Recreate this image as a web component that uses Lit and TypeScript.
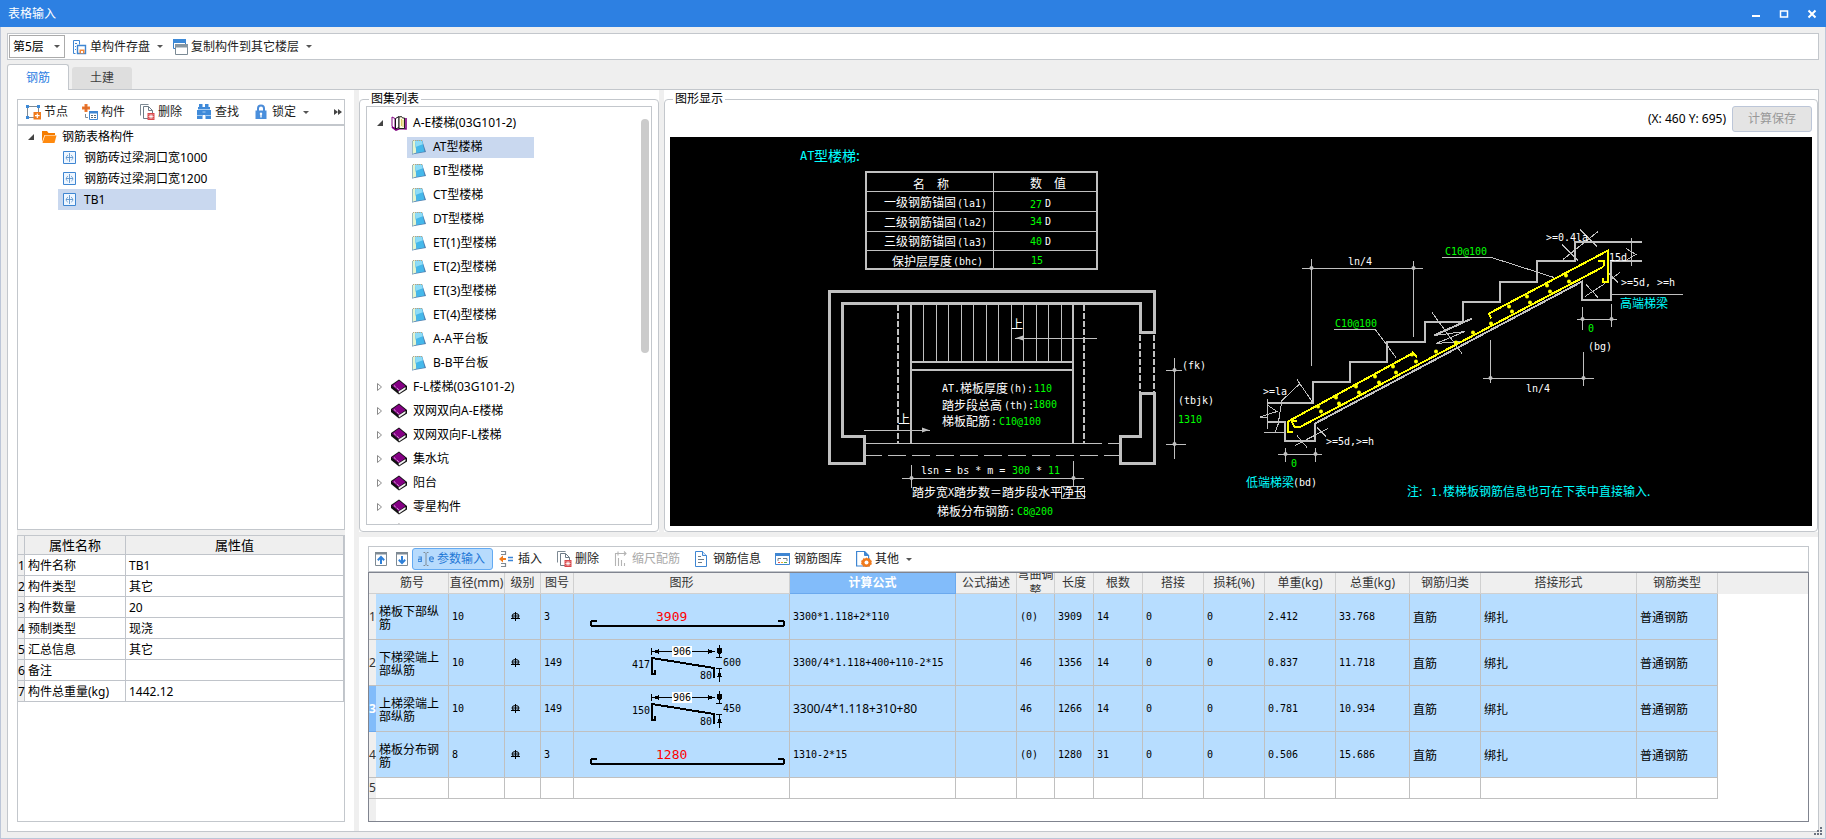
import { LitElement, html, css, svg, nothing } from "lit";
import { customElement, property } from "lit/decorators.js";
import { classMap } from "lit/directives/class-map.js";

const GREEN = "#00ff00";
const CYAN = "#00ffff";
const WHITE = "#ffffff";
const YELLOW = "#ffff00";

/* ---------- icons ---------- */

const icons: Record<string, any> = {
  saveOne: svg`<g fill="none" stroke="#3f86d2"><path d="M2.5 1.5h6v4M2.5 1.5v13h2"/><path d="M4 4.5h2M4 7.5h1M4 10.5h1"/><path d="M6.5 6.5h8v8h-8z" stroke-width="1.4"/></g><path d="M8.500 10.500h5v4h-5z" fill="#f58a3c"/><path d="M10 12h2v2h-2z" fill="#fff"/>`,
  copyTo: svg`<g fill="#fff"><path d="M1.500 .5h12v9h-12z" stroke="#3a80c8"/><path d="M3.500 5.500h12v10h-12z" stroke="#7b8a95"/></g><path d="M1 0h13v4H1z" fill="#3d8ad8"/><path d="M3 5h13v3.500H3z" fill="#8796a1"/>`,
  node: svg`<path d="M2.500 2.500h11v11h-11z" fill="#fff" stroke="#7e8a94"/><g fill="#3d8ad8"><path d="M1 1h3v3H1zM12 1h3v3h-3zM1 12h3v3H1z"/></g><path d="M8.500 8h7.500v7.500H8.500z" fill="#f07a1c"/><path d="M12.300 9.500v4.500M10 11.700h4.600" stroke="#fff" stroke-width="1.200"/>`,
  part: svg`<path d="M2.500 0h3v2.500H8v3H5.500V8h-3V5.500H0v-3h2.500z" fill="#ee7a30"/><path d="M4 1v6M1 4h6" stroke="#c75f20" stroke-width=".5"/><path d="M7.500 7.500h8v8h-8z" fill="#fff" stroke="#3f86d2"/><path d="M7 7h9v2.500H7z" fill="#3f86d2"/><path d="M9 11.500h2M12 11.500h2M9 13.500h2M12 13.500h2" stroke="#5c6d7a"/><path d="M3.500 10v3.500H6" stroke="#7e8a94" fill="none"/>`,
  del: svg`<path d="M1.500 11.500v-11h8" fill="none" stroke="#7e8a94"/><path d="M4.500 2.500h5l4 4v8h-9z" fill="#fff" stroke="#6f7c87"/><path d="M9.500 2.500v4h4" fill="none" stroke="#6f7c87"/><path d="M8.500 9h7v7h-7z" fill="#d9484c"/><path d="M10 10.500l4 4M14 10.500l-4 4M12 10v5M9.500 12.500h5" stroke="#fff" stroke-width=".8"/>`,
  find: svg`<path d="M3 0h3.500v3H9V0h3.500v3H14v3h1v9H9.500v-4h-3v4H1V6h1V3h1z" fill="#3f8ad9"/><path d="M1 11.500h5.500M9.500 11.500H15M2 5.500h12M6.500 8h3" stroke="#a9cdf2"/>`,
  lock: svg`<path d="M5 7V4.500a3 3 0 0 1 6 0V7" fill="none" stroke="#4a8bd8" stroke-width="2"/><path d="M2.500 6.500h11v8.500h-11z" fill="#4a8fdc"/><path d="M8 8.500a1.400 1.400 0 0 1 .7 2.500v2.500H7.300V11A1.400 1.400 0 0 1 8 8.500z" fill="#fff"/>`,
  up: svg`<path d="M2.500 1.500h11v13h-11z" fill="#fff" stroke="#7e8a94"/><path d="M2 1h12v2.500H2z" fill="#7e8a94"/><path d="M8 13V6M4.800 9.200L8 6l3.200 3.200" fill="none" stroke="#2f80d8" stroke-width="2"/>`,
  down: svg`<path d="M2.500 1.500h11v13h-11z" fill="#fff" stroke="#7e8a94"/><path d="M2 1h12v2.500H2z" fill="#7e8a94"/><path d="M8 5v7M4.800 8.800L8 12l3.200-3.200" fill="none" stroke="#2f80d8" stroke-width="2"/>`,
  param: svg`<path d="M5.500 1.500h1.500l1 1 1-1h1.500M8 2.500v11M5.500 14.500H7l1-1 1 1h1.500" fill="none" stroke="#7e8a94"/><path d="M.5 6h2.800v4.500H1.200a1.100 1.100 0 0 1 0-2.400h2M11.500 8h4c0-3-4-3-4 0 0 3 3 3 3.800 1.800" fill="none" stroke="#3a85d8" stroke-width="1.200"/>`,
  insert: svg`<path d="M2 .5h4.500v3H2M2 15.500h4.500v-3H2" fill="none" stroke="#7e8a94" stroke-width="1.200"/><path d="M0 8l4-3.500V7h3v2H4v2.500z" fill="#f07a1c"/><path d="M9 6.500h5M9 9.500h5" stroke="#3a85d8" stroke-width="1.600"/>`,
  scale: svg`<g fill="none" stroke="#b4b4b4"><path d="M2.500 2v13M5.500 7v8M8.500 9v6M11.500 12v3M3 2.500h10M11 .5l2 2-2 2M5 .5v4" stroke-width="1.100"/></g>`,
  info: svg`<path d="M1.500 .5h7l4 4v11h-11z" fill="#fff" stroke="#3f86d2"/><path d="M8.500 .5v4h4" fill="#d7e8fa" stroke="#3f86d2"/><path d="M4 5.500h3M4 8.500h6M4 11.500h4" stroke="#6f7c87"/>`,
  library: svg`<path d="M.5 2.500h14v11H.5z" fill="#fff" stroke="#3f86d2"/><path d="M0 2h15v3H0z" fill="#3f86d2"/><path d="M3 10V7.500h3M8 7.500h4V10" fill="none" stroke="#6f7c87"/><path d="M3 11.500h2" stroke="#e0574f"/><path d="M6 11.500h2" stroke="#f0b030"/><path d="M9 11.500h3" stroke="#62b04c"/>`,
  other: svg`<path d="M.6 .5h8l4 4v10.500h-12z" fill="#fff" stroke="#3f86d2" stroke-width="1.200"/><path d="M8.500 .5v4h4" fill="#3f86d2" stroke="#3f86d2"/><path d="M10.500 6.500l1.500 1 1.800-.2.800 1.700 1.300.9-.5 1.700.5 1.700-1.500.8-.8 1.700-1.800-.3-1.500 1-1.500-1-1.700.2-.6-1.600-1.500-1 .5-1.700-.4-1.600 1.500-.9.700-1.700 1.700.3z" fill="#f07a1c"/><circle cx="10.500" cy="11.500" r="2" fill="#fff"/>`,
  folder: svg`<path d="M1 2h5l1.500 2H14v2H3.500L1 13z" fill="#f57c00"/><path d="M4 6.500h11.500L13.500 14H1.500z" fill="#ff8a0f"/>`,
  item: svg`<path d="M1.500 1.500h12v12h-12z" fill="#eef6ff" stroke="#3f86d2"/><path d="M7.500 3v9M4 7.500h7M6 5c-2.500 2-2 4-.5 5M9 5c2.500 2 2 4 .5 5" fill="none" stroke="#5a93cc" stroke-width=".9"/>`,
  bookOpen: svg`<path d="M1 2l3 1.500v10L1 11.500z" fill="#fff" stroke="#800080"/><path d="M1 12l4 3 4-1.500 6 .5V3" fill="none" stroke="#800080" stroke-width="1.600"/><path d="M4.500 3.500L8 1.500v11l-3.500 1.500z" fill="#fff" stroke="#111"/><path d="M8 2l2.500-.5 1 1.500h2v10.500H8z" fill="#fffbe0" stroke="#222"/><path d="M10.500 4v7M12 5v7" stroke="#d8c860"/>`,
  book: svg`<path d="M0 6L8 .5l8 6.500v3.500L8 15.500 0 9z" fill="#111"/><path d="M1 6.500l7-5 6.500 5.500L7.500 12z" fill="#850085"/><path d="M7.500 12.500l7-4.500v2l-6.500 4.500z" fill="#f4f4f4"/><path d="M3 6.500l5.500 5" stroke="#fff" stroke-dasharray="1 1"/>`,
  page: svg`<path d="M1 2l10-1 4 12-9 1.500-5 1z" fill="#4e7fb0"/><path d="M1.500 2L4 1.500l1.500 12L1.500 15z" fill="#e4f5cf"/><path d="M4 2l7-.7 2.500 11.200L5.500 14z" fill="#45b8ea"/><path d="M4 2l7-.7.8 4L4.500 8z" fill="#8edcf6"/><path d="M2 1.500h9" stroke="#b7a67c" stroke-dasharray="1 1"/>`,
};

const icon = (name: string) => html`<svg class="icon" viewBox="0 0 16 16" aria-hidden="true">${icons[name]}</svg>`;

const iconStyles = css`
  .icon { width: 16px; height: 16px; flex: none; display: block; }
`;

/* ---------- toolbar button ---------- */

@customElement("tool-button")
export class ToolButton extends LitElement {
  @property() icon = "";
  @property() label = "";
  @property() hint = "";
  @property({ type: Boolean }) menu = false;
  @property({ type: Boolean }) active = false;
  @property({ type: Boolean }) disabled = false;

  static styles = [
    iconStyles,
    css`
      :host { display: flex; flex: none; }
      button {
        display: flex; align-items: center; gap: 3px; height: 22px; box-sizing: border-box;
        padding: 0 7px 0 5px; border: 1px solid transparent; border-radius: 3px; background: none;
        font: 12px/16px "Noto Sans", "Noto Sans CJK SC", sans-serif; color: #1c1c1c; white-space: nowrap;
      }
      button.menu { padding-right: 2px; }
      button.bare { padding: 0; width: 21px; justify-content: center; }
      button.active { background: #b7dbfd; border-color: #63aaf2; color: #1f78d6; }
      button:disabled { color: #aaaaaa; }
      .arrow { margin-left: 4px; border: 3px solid transparent; border-top-color: #555555; border-bottom: 0; }
    `,
  ];

  render() {
    const cls = { menu: this.menu, active: this.active, bare: !this.label };
    return html`<button type="button" class=${classMap(cls)} ?disabled=${this.disabled}
      aria-label=${this.label || this.hint}>
      ${icon(this.icon)}${this.label ? html`<span>${this.label}</span>` : nothing}
      ${this.menu ? html`<span class="arrow"></span>` : nothing}
    </button>`;
  }
}

/* ---------- stair drawing ---------- */

type Label = [x: number, y: number, text: string, colour?: string];

// Wide (CJK) labels of the drawing
const wideLabels: Label[] = [
  [913, 188, "名"], [937, 188, "称"], [1030, 187, "数"], [1054, 187, "值"],
  [884, 206, "一级钢筋锚固"], [884, 226, "二级钢筋锚固"], [884, 245, "三级钢筋锚固"], [892, 265, "保护层厚度"],
  [1011, 328, "上"], [898, 423, "上"],
  [960, 392, "梯板厚度"], [942, 409, "踏步段总高"], [942, 425, "梯板配筋"],
  [912, 496, "踏步宽"], [954, 496, "踏步数＝踏步段水平净长"],
  [937, 515, "梯板分布钢筋"],
  [1246, 486, "低端梯梁", CYAN], [1620, 307, "高端梯梁", CYAN],
  [1407, 495, "注:", CYAN], [1443, 495, "楼梯板钢筋信息也可在下表中直接输入.", CYAN],
];

// Narrow (latin) labels of the drawing
const narrowLabels: Label[] = [
  [957, 206, "(la1)"], [957, 225, "(la2)"], [957, 245, "(la3)"], [953, 264, "(bhc)"],
  [1030, 207, "27", GREEN], [1030, 224, "34", GREEN], [1030, 244, "40", GREEN], [1031, 263, "15", GREEN],
  [1045, 206, "D"], [1045, 224, "D"], [1045, 244, "D"],
  [942, 391, "AT."], [1009, 391, "(h):"], [1034, 391, "110", GREEN],
  [1004, 408, "(th):"], [1033, 407, "1800", GREEN], [991, 424, ":"], [999, 424, "C10@100", GREEN],
  [1182, 368, "(fk)"], [1178, 403, "(tbjk)"], [1178, 422, "1310", GREEN],
  [921, 473, "lsn = bs * m ="], [1012, 473, "300", GREEN], [1036, 473, "*"], [1048, 473, "11", GREEN],
  [948, 495, "X"], [1009, 514, ":"], [1017, 514, "C8@200", GREEN],
  [1348, 264, "ln/4"], [1335, 326, "C10@100", GREEN], [1445, 254, "C10@100", GREEN],
  [1263, 394, ">=la"], [1326, 444, ">=5d,"], [1356, 444, ">=h"],
  [1291, 466, "0", GREEN], [1293, 485, "(bd)"], [1431, 495, "1.", CYAN],
  [1546, 240, ">=0.4la"], [1609, 260, "15d"], [1621, 285, ">=5d,"], [1657, 285, ">=h"],
  [1588, 331, "0", GREEN], [1588, 349, "(bg)"], [1526, 391, "ln/4"],
];

const treads = [923.5, 936.5, 948.5, 961.5, 973.5, 986.5, 998.5, 1011.5, 1023.5, 1036.5, 1048.5, 1061.5];

const rebarDots = [
  [1318, 406], [1336, 397], [1356, 386], [1375, 376], [1393, 366], [1412, 354],
  [1321, 411], [1339, 403], [1359, 392], [1379, 382], [1396, 372], [1416, 361],
  [1436, 351], [1456, 342], [1473, 332], [1491, 323],
  [1509, 306], [1527, 296], [1547, 285], [1566, 275],
  [1512, 311], [1530, 302], [1550, 291], [1569, 281],
];

const dimensionTicks = [
  [1311, 267], [1413, 267], [1285, 453], [1315, 453], [1582, 318], [1611, 318], [1490, 377], [1583, 377],
  [911, 477], [1073, 477], [1174, 369], [1174, 443],
];

@customElement("stair-drawing")
export class StairDrawing extends LitElement {
  static styles = css`
    :host { display: block; background: #000000; overflow: hidden; min-height: 0; }
    svg { display: block; width: 100%; height: 100%; }
    .line { fill: none; stroke: #c0c0c0; shape-rendering: crispEdges; }
    .thin { stroke-width: 1; }
    .mid { stroke-width: 2; }
    .wall { stroke-width: 3; }
    .dash { stroke-dasharray: 6 2; }
    .axis { stroke-dasharray: 18 6; }
    .bar { fill: none; stroke: #ffff00; stroke-width: 2; shape-rendering: crispEdges; }
    .wide { font: 12px "Noto Sans CJK SC", sans-serif; }
    .narrow { font: 10px "DejaVu Sans Mono", "Liberation Mono", monospace; white-space: pre; }
    .title { font: 14px "Noto Sans CJK SC", sans-serif; }
    .title-latin { font: 12px "DejaVu Sans Mono", "Liberation Mono", monospace; }
  `;

  render() {
    return html`<svg viewBox="670 137 1142 388" role="img" aria-label="AT型楼梯">
      <g class="line thin">
        <path d="M866 190.500H1097M866 210.500H1097M866 230.500H1097M866 249.500H1097M993.500 171V268" />
        ${treads.map((x) => svg`<path d="M${x} 303V360" />`)}
        <path d="M865 442.500H1102M1108 442.500H1120" />
        <path class="axis" d="M864 454.500H1120" />
        <path d="M1015 337.500H1097M864 429.500H930" />
        <path d="M1174.500 357V458M1166 369.500H1182M1166 443.500H1186" />
        <path d="M902 477.500H1084M911.500 464V487M1073.500 460V486" />
        <path d="M1302 267.500H1423M1311.500 258V365M1413.500 260V336" />
        <path d="M1334 328.500H1375L1396 357M1442 256.500H1490L1554 277" />
        <path d="M1267.500 398V428M1268 405L1277 411L1260 416.500H1268" />
        <path d="M1312 401L1297 379M1300 383L1282 400L1278 424L1275 432M1264 431.500H1285" />
        <path d="M1432 312L1462 353M1434 335L1465 331L1436 343L1460 341" />
        <path d="M1295 445L1328 428M1297 435L1307 447M1317 427L1326 436" />
        <path d="M1278 453.500H1322M1285.500 447V461M1315.500 447V461" />
        <path d="M1563 259L1598 231M1580 229L1597 246M1562 244L1578 260" />
        <path d="M1631.500 237V265M1626 248L1636 254L1627 259" />
        <path d="M1611 293.500H1683M1609 273L1618 282M1620 272L1612 278M1585 296L1605 283M1586 284L1598 297" />
        <path d="M1577 318.500H1617M1582.500 306V329M1611.500 303V326" />
        <path d="M1483 377.500H1594M1490.500 339V382M1583.500 351V385" />
      </g>
      <g class="line mid">
        <path d="M866 171H1097V268H866Z" />
        <path d="M911 303V442M1073 303V442M911 361H1073M911 369H1073" />
        <path class="dash" d="M898 304V442M1084 304V442M1140 334V392M1154 334V392" />
        <path d="M1267 402H1313V381H1350V361H1387V341H1425V321H1463V301H1500V281H1537V260H1575V241H1642" />
        <path d="M1267 421H1285V440H1315V423L1582 281V299H1611V260H1642" />
        <path d="M1434 335L1472 318" />
      </g>
      <g class="line wall">
        <path d="M829.500 290.500V462.500H864.500V435.500H842.500V302.500H1140.500V331.500H1154.500V290.500Z" />
        <path d="M1140.500 392.500H1154.500V462.500H1120.500V435.500H1140.500Z" />
      </g>
      <g fill="#c0c0c0">
        <path d="M1016 337.500L1023 335V340ZM929 429.500L922 427V432Z" />
        ${dimensionTicks.map(([x, y]) => svg`<circle cx=${x + 0.5} cy=${y + 0.5} r="2" />`)}
      </g>
      <g class="bar">
        <path d="M1293 431H1288V421L1414 352M1412 351L1417 357" />
        <path d="M1297 420L1292 421L1294 426L1299 427L1602 267L1604 265V260H1598" />
        <path d="M1491 318L1489 313L1608 250V281H1603V277" />
      </g>
      <g fill=${YELLOW}>${rebarDots.map(([x, y]) => svg`<circle cx=${x} cy=${y} r="2" />`)}</g>
      <path class="line thin" d="M1061.500 485.500H1084.500V497.500H1061.500Z" />
      <text class="title" x="814" y="160" fill=${CYAN}>型楼梯:</text>
      <text class="title-latin" x="800" y="159" fill=${CYAN}>AT</text>
      ${wideLabels.map(([x, y, s, c]) => svg`<text class="wide" x=${x} y=${y} fill=${c ?? WHITE}>${s}</text>`)}
      ${narrowLabels.map(([x, y, s, c]) => svg`<text class="narrow" x=${x} y=${y} fill=${c ?? WHITE}>${s}</text>`)}
    </svg>`;
  }
}

/* ---------- rebar shapes ---------- */

@customElement("rebar-shape")
export class RebarShape extends LitElement {
  @property() kind = "3";
  @property({ type: Array }) sizes: string[] = [];

  static styles = css`
    :host { display: block; }
    svg { display: block; width: 215px; height: 45px; }
    path { fill: none; stroke: #000000; shape-rendering: crispEdges; }
    .steel { stroke-width: 2; }
    .head { fill: #000000; stroke: none; }
    text { font: 10px "DejaVu Sans Mono", monospace; fill: #000000; }
    .total { font-size: 13px; fill: #ff0000; }
  `;

  render() {
    const [a, b, c, d] = this.sizes;
    if (this.kind === "3") {
      return html`<svg viewBox="0 0 215 45">
        <path class="steel" d="M23 27H18L17 28V31L18 32H209L210 31V28L209 27H204" />
        <text class="total" x="82" y="27">${a}</text>
      </svg>`;
    }
    return html`<svg viewBox="0 0 215 45">
      <path class="steel" d="M81 30V34H78V18L140 28V38" />
      <path d="M77.500 8V15M78 11.500H141M145.500 5V17M142 17.500H148M142 28.500H148M145.500 29V42" />
      <path class="head" d="M78 11.500L85 9V14ZM141 11.500L134 9V14ZM143 8H148V12L145.500 15L143 12ZM145.500 31L143 37H148Z" />
      <rect x="98" y="6" width="20" height="11" fill="#ffffff" />
      <text x="99" y="15">${a}</text>
      <text x="58" y="28">${b}</text>
      <text x="149" y="26">${c}</text>
      <text x="126" y="39">${d}</text>
    </svg>`;
  }
}

/* ---------- data ---------- */

const properties: [string, string][] = [
  ["构件名称", "TB1"], ["构件类型", "其它"], ["构件数量", "20"], ["预制类型", "现浇"],
  ["汇总信息", "其它"], ["备注", ""], ["构件总重量(kg)", "1442.12"],
];

const atlas = ["AT型楼梯", "BT型楼梯", "CT型楼梯", "DT型楼梯", "ET(1)型楼梯", "ET(2)型楼梯", "ET(3)型楼梯", "ET(4)型楼梯", "A-A平台板", "B-B平台板"];
const atlasGroups = ["F-L楼梯(03G101-2)", "双网双向A-E楼梯", "双网双向F-L楼梯", "集水坑", "阳台", "零星构件", ""];

const columns: [string, number][] = [
  ["筋号", 73], ["直径(mm)", 56], ["级别", 36], ["图号", 33], ["图形", 216], ["计算公式", 166], ["公式描述", 61],
  ["弯曲调整", 38], ["长度", 39], ["根数", 49], ["搭接", 61], ["损耗(%)", 61], ["单重(kg)", 71], ["总重(kg)", 74],
  ["钢筋归类", 71], ["搭接形式", 156], ["钢筋类型", 81],
];
const tableWidth = columns.reduce((sum, [, w]) => sum + w, 7);

interface Rebar { name: string; dia: string; no: string; sizes: string[]; formula: string; bend: string; len: string; qty: string; unit: string; total: string; }

const rebars: Rebar[] = [
  { name: "梯板下部纵筋", dia: "10", no: "3", sizes: ["3909"], formula: "3300*1.118+2*110", bend: "(0)", len: "3909", qty: "14", unit: "2.412", total: "33.768" },
  { name: "下梯梁端上部纵筋", dia: "10", no: "149", sizes: ["906", "417", "600", "80"], formula: "3300/4*1.118+400+110-2*15", bend: "46", len: "1356", qty: "14", unit: "0.837", total: "11.718" },
  { name: "上梯梁端上部纵筋", dia: "10", no: "149", sizes: ["906", "150", "450", "80"], formula: "3300/4*1.118+310+80", bend: "46", len: "1266", qty: "14", unit: "0.781", total: "10.934" },
  { name: "梯板分布钢筋", dia: "8", no: "3", sizes: ["1280"], formula: "1310-2*15", bend: "(0)", len: "1280", qty: "31", unit: "0.506", total: "15.686" },
];

const currentRow = 2;

/* ---------- application ---------- */

@customElement("app-root")
export class AppRoot extends LitElement {
  static styles = [
    iconStyles,
    css`
      :host {
        display: flex; flex-direction: column; height: 100vh; overflow: hidden; box-sizing: border-box;
        font: 12px/16px "Noto Sans", "Noto Sans CJK SC", sans-serif; color: #000000; background: #efefef;
      }
      * { box-sizing: border-box; }
      button { font: inherit; }

      .titlebar { display: flex; align-items: center; height: 27px; flex: none; background: #2d80e2; color: #ffffff; padding-left: 8px; }
      .titlebar h1 { margin: 0; font: inherit; flex: 1; }
      .titlebar button { width: 28px; height: 27px; padding: 0; border: 0; background: none; display: grid; place-items: center; }
      .titlebar svg { width: 10px; height: 10px; fill: none; stroke: #ffffff; stroke-width: 2; }

      .window { flex: 1; min-height: 0; display: flex; flex-direction: column; padding: 6px; border: 1px solid #bcc6d8; border-top: 0; position: relative; }
      .grip { position: absolute; right: 3px; bottom: 3px; width: 8px; height: 8px; fill: #6b7280; }

      .bar { display: flex; align-items: center; flex: none; background: #ffffff; border: 1px solid #c3c7cc; }
      .bar.top { height: 27px; padding-left: 1px; }
      .floor { display: flex; align-items: center; width: 56px; height: 23px; border: 1px solid #ababab; background: #ffffff; position: relative; }
      .floor select { appearance: none; width: 100%; height: 100%; border: 0; padding: 0 0 0 3px; background: none; font: inherit; color: inherit; }
      .floor::after { content: ""; position: absolute; right: 4px; border: 3px solid transparent; border-top-color: #555555; border-bottom: 0; pointer-events: none; }

      .tabs { display: flex; align-items: flex-end; height: 29px; flex: none; gap: 3px; }
      .tabs button { border: 0; padding: 0; width: 60px; height: 22px; border-radius: 3px 3px 0 0; background: #dedede; color: #3c3c3c; }
      .tabs button.on { width: 62px; height: 26px; margin-bottom: -1px; border: 1px solid #c3c7cc; border-bottom: 0; background: #ffffff; color: #2d80e2; position: relative; z-index: 1; }

      .content { flex: 1; min-height: 0; display: flex; background: #ffffff; border: 1px solid #c3c7cc; }
      .left { width: 346px; flex: none; padding: 9px; display: flex; flex-direction: column; min-height: 0; }
      .splitter { width: 5px; flex: none; background: #efefef; }
      .hsplitter { height: 5px; flex: none; background: #efefef; }
      .right { flex: 1; min-width: 0; display: flex; flex-direction: column; }

      .bar.parts { height: 26px; padding-left: 1px; }
      .more { margin-left: auto; padding: 0 2px 0 0; border: 0; background: none; height: 22px; }
      .more svg { display: block; width: 8px; height: 6px; fill: #444444; }
      .tree { flex: 403 1 0; min-height: 0; border: 1px solid #c3c7cc; overflow: hidden; }
      ul { list-style: none; margin: 0; padding: 0; }
      .node { display: flex; align-items: center; height: 21px; }
      .toggle { width: 8px; height: 8px; flex: none; fill: none; stroke: #8a8a8a; display: block; }
      .toggle.open { fill: #444444; stroke: none; }
      .tree .root { padding-left: 9px; }
      .tree .root .icon { margin: 0 5px 0 6px; }
      .tree .leaf, .atlas .leaf { gap: 6px; padding-left: 4px; }
      .tree .leaf { margin-left: 40px; width: 158px; }
      .selected { background: #c9d8ef; }

      .grid-box { flex: 285 1 0; min-height: 0; border: 1px solid #c3c7cc; overflow: hidden; background: #ffffff; }
      table { border-collapse: separate; border-spacing: 0; table-layout: fixed; }
      th, td { padding: 0; font-weight: normal; border: 0 solid #c0c4ca; border-width: 0 1px 1px 0; overflow: hidden; }
      .props { width: 100%; }
      .props .num { width: 7px; }
      .props .key { width: 101px; }
      .props thead th { height: 19px; font-size: 13px; line-height: 16px; background: #efefef; }
      .props tbody th, .props tbody td { height: 21px; text-align: left; padding: 2px 0 0 3px; }
      .props tbody th.idx { padding-left: 0; background: #efefef; text-align: center; overflow: visible; }

      .upper { flex: 442 1 0; min-height: 0; display: flex; background: #ffffff; }
      .frame { padding-top: 2px; min-height: 0; display: flex; }
      .frame.list { width: 300px; flex: none; }
      .frame.graph { flex: 1; min-width: 0; }
      fieldset { flex: 1; min-width: 0; min-height: 0; margin: 0; border: 1px solid #c3c7cc; border-radius: 4px; padding: 0 6px 6px; display: flex; flex-direction: column; }
      .graph fieldset { padding: 0 5px 5px; }
      legend { margin-left: 3px; padding: 0 2px; height: 14px; line-height: 14px; }
      .atlas { flex: 1; min-height: 0; display: flex; border: 1px solid #c3c7cc; overflow: hidden; }
      .atlas ul { flex: 1; padding-top: 4px; }
      .atlas li { height: 24px; display: flex; align-items: center; }
      .atlas .group { padding-left: 9px; }
      .atlas .group .icon { margin: 0 6px 0 7px; }
      .atlas .leaf { margin-left: 40px; width: 127px; }
      .track { width: 8px; margin: 12px 2px 0 0; }
      .thumb { height: 234px; border-radius: 4px; background: #cbcbcb; }

      .coords { display: flex; justify-content: flex-end; align-items: flex-start; gap: 6px; height: 31px; flex: none; }
      .coords output { line-height: 26px; }
      .coords button { width: 80px; height: 26px; border: 1px solid #bcc6d8; border-radius: 3px; background: #e4e4e4; color: #989898; }
      stair-drawing { flex: 1; }

      .lower { flex: 276 1 0; min-height: 0; padding: 9px; display: flex; flex-direction: column; }
      .bar.rebar { height: 26px; padding-left: 1px; }
      .sheet {
        flex: 1; min-height: 0; border: 1px solid #80848f; overflow: hidden;
        background: linear-gradient(#efefef, #efefef) 0 0 / 100% 21px no-repeat, linear-gradient(#efefef, #efefef) 0 0 / 7px 100% no-repeat, #ffffff;
      }
      .rebars th, .rebars td { border-color: #c0c0c0; }
      .rebars thead th { color: #333333; background: #efefef; border-color: #d0d0d0; }
      .rebars thead div { height: 20px; overflow: hidden; display: grid; place-content: center; white-space: nowrap; line-height: 16px; }
      .rebars thead div.wrap { white-space: normal; text-align: center; }
      .rebars thead th.on, .rebars .idx.on { background: #82bcfa; color: #ffffff; font-weight: bold; border-color: #6ba9ee; }
      .rebars td { height: 46px; padding-left: 3px; background: #b7ddff; font: 10px/13px "DejaVu Sans Mono", "Noto Sans CJK SC", monospace; }
      .rebars td.cjk { font: 12px/13px "Noto Sans CJK SC", sans-serif; }
      .rebars td.shape { padding: 0; }
      .rebars .idx { width: 7px; background: #efefef; color: #333333; overflow: visible; border-right: 0; }
      .rebars tr.blank td, .rebars tr.blank th { height: 21px; }
      .rebars tr.blank td { background: #ffffff; }
      .rebars input { width: 100%; border: 0; padding: 0; background: none; color: inherit; font: 12px/16px "Noto Sans", sans-serif; display: block; outline: 0; }
      .grade { width: 9px; height: 9px; display: block; margin-left: 3px; fill: none; stroke: #000000; }
    `,
  ];

  private toggle(open: boolean) {
    return open
      ? html`<svg class="toggle open" viewBox="0 0 8 8"><path d="M7 1V7H1Z" /></svg>`
      : html`<svg class="toggle" viewBox="0 0 8 8"><path d="M1.500 .5L5.500 4L1.500 7.500Z" /></svg>`;
  }

  private leftPanel() {
    const parts = ["钢筋砖过梁洞口宽1000", "钢筋砖过梁洞口宽1200", "TB1"];
    return html`<section class="left">
      <div class="bar parts" role="toolbar">
        <tool-button icon="node" label="节点"></tool-button>
        <tool-button icon="part" label="构件"></tool-button>
        <tool-button icon="del" label="删除"></tool-button>
        <tool-button icon="find" label="查找"></tool-button>
        <tool-button icon="lock" label="锁定" menu></tool-button>
        <button class="more" type="button" aria-label="更多"><svg viewBox="0 0 8 6"><path d="M0 0L4 3L0 6ZM4 0L8 3L4 6Z" /></svg></button>
      </div>
      <ul class="tree" role="tree">
        <li class="node root">${this.toggle(true)}${icon("folder")}<span>钢筋表格构件</span></li>
        ${parts.map((p) => html`<li class=${classMap({ node: true, leaf: true, selected: p === "TB1" })}>${icon("item")}<span>${p}</span></li>`)}
      </ul>
      <div class="hsplitter"></div>
      <div class="grid-box">
        <table class="props">
          <thead><tr><th class="num"></th><th class="key">属性名称</th><th>属性值</th></tr></thead>
          <tbody>${properties.map(([k, v], i) => html`<tr><th class="idx">${i + 1}</th><th>${k}</th><td>${v}</td></tr>`)}</tbody>
        </table>
      </div>
    </section>`;
  }

  private atlasPanel() {
    return html`<div class="frame list"><fieldset>
      <legend>图集列表</legend>
      <div class="atlas">
        <ul role="tree">
          <li class="group">${this.toggle(true)}${icon("bookOpen")}<span>A-E楼梯(03G101-2)</span></li>
          ${atlas.map((a, i) => html`<li><div class=${classMap({ node: true, leaf: true, selected: i === 0 })}>${icon("page")}<span>${a}</span></div></li>`)}
          ${atlasGroups.map((g) => html`<li class="group">${this.toggle(false)}${icon("book")}<span>${g}</span></li>`)}
        </ul>
        <div class="track"><div class="thumb"></div></div>
      </div>
    </fieldset></div>`;
  }

  private rebarRow(r: Rebar, i: number) {
    return html`<tr>
      <th class=${classMap({ idx: true, on: i === currentRow })}>${i + 1}</th>
      <td class="cjk">${r.name}</td>
      <td>${r.dia}</td>
      <td><svg class="grade" viewBox="0 0 9 9" role="img" aria-label="三级钢"><ellipse cx="4.500" cy="4" rx="3.500" ry="2.500" /><path d="M4.500 0V9M0 6.500H9M1 4H8" /></svg></td>
      <td>${r.no}</td>
      <td class="shape"><rebar-shape kind=${r.no} .sizes=${r.sizes}></rebar-shape></td>
      <td>${i === currentRow ? html`<input aria-label="计算公式" .value=${r.formula} />` : r.formula}</td>
      <td></td><td>${r.bend}</td><td>${r.len}</td><td>${r.qty}</td><td>0</td><td>0</td>
      <td>${r.unit}</td><td>${r.total}</td>
      <td class="cjk">直筋</td><td class="cjk">绑扎</td><td class="cjk">普通钢筋</td>
    </tr>`;
  }

  private lowerPanel() {
    return html`<section class="lower">
      <div class="bar rebar" role="toolbar">
        <tool-button icon="up" hint="上移"></tool-button>
        <tool-button icon="down" hint="下移"></tool-button>
        <tool-button icon="param" label="参数输入" active></tool-button>
        <tool-button icon="insert" label="插入"></tool-button>
        <tool-button icon="del" label="删除"></tool-button>
        <tool-button icon="scale" label="缩尺配筋" disabled></tool-button>
        <tool-button icon="info" label="钢筋信息"></tool-button>
        <tool-button icon="library" label="钢筋图库"></tool-button>
        <tool-button icon="other" label="其他" menu></tool-button>
      </div>
      <div class="sheet">
        <table class="rebars" style="width:${tableWidth}px">
          <colgroup><col style="width:7px" />${columns.map(([, w]) => html`<col style="width:${w}px" />`)}</colgroup>
          <thead><tr><th class="idx"></th>${columns.map(
            ([name]) => html`<th class=${classMap({ on: name === "计算公式" })}><div class=${classMap({ wrap: name === "弯曲调整" })}>${name}</div></th>`
          )}</tr></thead>
          <tbody>
            ${rebars.map((r, i) => this.rebarRow(r, i))}
            <tr class="blank"><th class="idx">5</th>${columns.map(() => html`<td></td>`)}</tr>
          </tbody>
        </table>
      </div>
    </section>`;
  }

  render() {
    return html`
      <header class="titlebar">
        <h1>表格输入</h1>
        <button type="button" aria-label="最小化"><svg viewBox="0 0 10 10"><path d="M1 7H9" /></svg></button>
        <button type="button" aria-label="最大化"><svg viewBox="0 0 10 10"><path d="M1.500 2H8.500V8H1.500Z" stroke-width="1.500" /></svg></button>
        <button type="button" aria-label="关闭"><svg viewBox="0 0 10 10"><path d="M1.500 1.500L8.500 8.500M8.500 1.500L1.500 8.500" /></svg></button>
      </header>
      <main class="window">
        <div class="bar top" role="toolbar">
          <label class="floor"><select aria-label="楼层"><option>第5层</option></select></label>
          <tool-button icon="saveOne" label="单构件存盘" menu></tool-button>
          <tool-button icon="copyTo" label="复制构件到其它楼层" menu></tool-button>
        </div>
        <nav class="tabs" role="tablist">
          <button type="button" role="tab" class="on" aria-selected="true">钢筋</button>
          <button type="button" role="tab" aria-selected="false">土建</button>
        </nav>
        <div class="content">
          ${this.leftPanel()}
          <div class="splitter"></div>
          <div class="right">
            <div class="upper">
              ${this.atlasPanel()}
              <div class="splitter"></div>
              <div class="frame graph"><fieldset>
                <legend>图形显示</legend>
                <div class="coords">
                  <output>(X: 460 Y: 695)</output>
                  <button type="button" disabled>计算保存</button>
                </div>
                <stair-drawing></stair-drawing>
              </fieldset></div>
            </div>
            <div class="hsplitter"></div>
            ${this.lowerPanel()}
          </div>
        </div>
        <svg class="grip" viewBox="0 0 8 8" aria-hidden="true"><path d="M6 0h2v2H6zM3 3h2v2H3zM6 3h2v2H6zM0 6h2v2H0zM3 6h2v2H3zM6 6h2v2H6z" /></svg>
      </main>
    `;
  }
}
